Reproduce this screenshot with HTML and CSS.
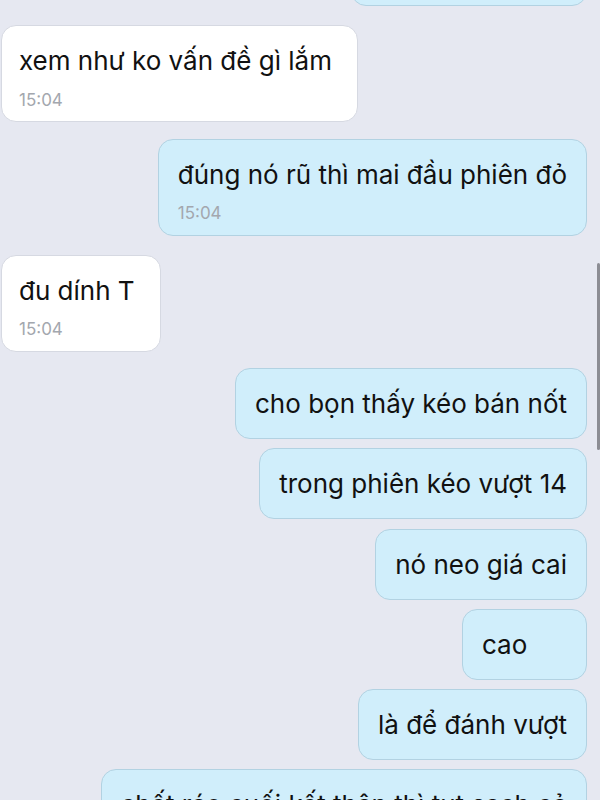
FILE: index.html
```html
<!DOCTYPE html>
<html>
<head>
    <meta charset="utf-8">
    <title>Chat</title>
    <link rel="stylesheet" href="styles.css">
</head>
<body>
    <div class="chat">
        <div class="row out first">
            <div class="bubble">ok để xem thêm</div>
        </div>
        <div class="row in group">
            <div class="bubble timed">
                <div class="text">xem như ko vấn đề gì lắm</div>
                <div class="time">15:04</div>
            </div>
        </div>
        <div class="row out after-time">
            <div class="bubble timed">
                <div class="text">đúng nó rũ thì mai đầu phiên đỏ</div>
                <div class="time">15:04</div>
            </div>
        </div>
        <div class="row in group">
            <div class="bubble timed">
                <div class="text">đu dính T</div>
                <div class="time">15:04</div>
            </div>
        </div>
        <div class="row out after-time">
            <div class="bubble">cho bọn thấy kéo bán nốt</div>
        </div>
        <div class="row out">
            <div class="bubble">trong phiên kéo vượt 14</div>
        </div>
        <div class="row out">
            <div class="bubble">nó neo giá cai</div>
        </div>
        <div class="row out">
            <div class="bubble">cao</div>
        </div>
        <div class="row out">
            <div class="bubble">là để đánh vượt</div>
        </div>
        <div class="row out">
            <div class="bubble">chết ráo cuối kết thân thì tụt sạch cả</div>
        </div>
    </div>

    <div class="scrollbar"></div>
</body>
</html>
```

FILE: styles.css
```css
html, body {
    margin: 0;
    height: 100%;
    overflow: hidden;
    background-color: #e6e8f1;
}
body {
    font-family: Inter, "Noto Sans", sans-serif;
    color: #111;
}
.chat {
    display: flex;
    flex-direction: column;
    padding: 0 13px 0 1px;
    margin-top: -65px;
}
.row {
    display: flex;
    margin-top: 9.25px;
}
.row.first { margin-top: 0; }
.row.group { margin-top: 19px; }
.row.after-time { margin-top: 16.5px; }
.row.in { justify-content: flex-start; }
.row.out { justify-content: flex-end; }

.bubble {
    box-sizing: border-box;
    min-width: 125px;
    font-size: 26px;
    line-height: 31px;
    padding: 19px;
    border-radius: 15px;
    border: 1px solid #d6d9e2;
    background: #fff;
    white-space: nowrap;
}
.in .bubble {
    padding-left: 17px;
    padding-right: 25px;
}
.out .bubble {
    background: #d0eefb;
    border-color: #b2d2e2;
}
.bubble.timed { padding-bottom: 11.5px; }
.time {
    font-size: 17px;
    line-height: 20px;
    margin-top: 13.5px;
    color: #a3a7ae;
}
.scrollbar {
    position: fixed;
    right: 0;
    top: 263px;
    width: 3px;
    height: 187px;
    border-radius: 2px;
    background: #8c8d94;
}
```
